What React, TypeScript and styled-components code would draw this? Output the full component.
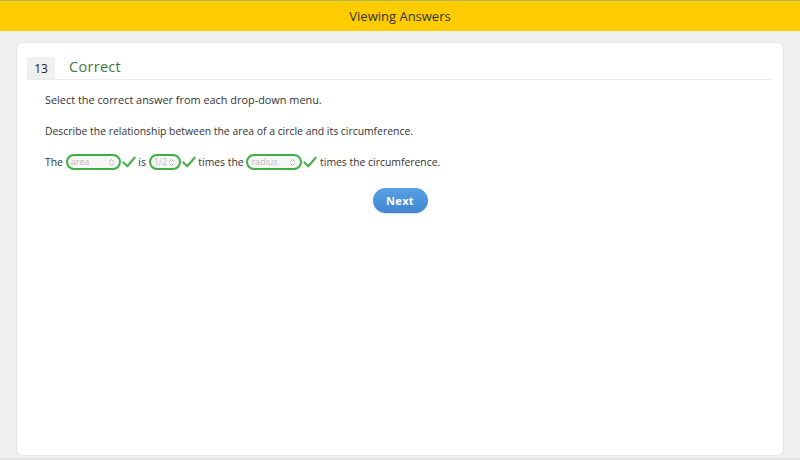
import styled, { createGlobalStyle } from "styled-components";

const GlobalStyle = createGlobalStyle`
  html, body {
    margin: 0;
    padding: 0;
    background: #f0f0f0;
    font-family: "Open Sans", "Liberation Sans", sans-serif;
  }
`;

const Check = () => (
  <CheckIcon viewBox="0 0 16 14" aria-hidden>
    <path d="M1.5 7.5 L6 12 L14.5 2" fill="none" stroke="#4caf50" strokeWidth="2.6" strokeLinecap="round" strokeLinejoin="round" />
  </CheckIcon>
);

const Dropdown = ({ value, width }: { value: string; width: number }) => (
  <>
    <Select $width={width}>
      <span>{value}</span>
      <Arrows viewBox="0 0 8 10" aria-hidden>
        <path d="M1.5 4 L4 1.5 L6.5 4" fill="none" stroke="#aaa" strokeWidth="1" />
        <path d="M1.5 6 L4 8.5 L6.5 6" fill="none" stroke="#aaa" strokeWidth="1" />
      </Arrows>
    </Select>
    <Check />
  </>
);

export default function App() {
  return (
    <Page>
      <GlobalStyle />
      <TopBar>Viewing Answers</TopBar>
      <Main>
        <Card>
          <Header>
            <Number>13</Number>
            <Status>Correct</Status>
          </Header>
          <Body>
            <Para $size={10.9}>Select the correct answer from each drop-down menu.</Para>
            <Para $size={10.4}>Describe the relationship between the area of a circle and its circumference.</Para>
            <Sentence>
              The <Dropdown value="area" width={55} /> is <Dropdown value="1/2" width={32} /> times the{" "}
              <Dropdown value="radius" width={56} /> times the circumference.
            </Sentence>
            <ButtonRow>
              <NextButton>Next</NextButton>
            </ButtonRow>
          </Body>
        </Card>
      </Main>
    </Page>
  );
}

const Page = styled.div`
  width: 800px;
  height: 460px;
  display: flex;
  flex-direction: column;
  background: #f0f0f0;
  border-top: 1px solid #a9b85e;
  box-sizing: border-box;
`;

const TopBar = styled.div`
  height: 30px;
  background: #ffcc00;
  color: #333;
  font-size: 13px;
  display: flex;
  align-items: center;
  justify-content: center;
`;

const Main = styled.div`
  flex: 1;
  padding: 11px 16px 2px;
  display: flex;
  border-bottom: 2px solid #e4e4e4;
`;

const Card = styled.div`
  flex: 1;
  background: #fff;
  border-radius: 7px;
  border: 1px solid #e6e6e6;
  padding: 14px 10px 0 10px;
`;

const Header = styled.div`
  display: flex;
  align-items: stretch;
  height: 22px;
  border-bottom: 1px solid #ececec;
`;

const Number = styled.div`
  width: 28px;
  background: #f0f0f0;
  color: #222;
  font-size: 12px;
  display: flex;
  align-items: center;
  justify-content: center;
`;

const Status = styled.div`
  margin-left: 14px;
  color: #3d7a3d;
  font-size: 14.5px;
  letter-spacing: 0.3px;
  line-height: 20px;
`;

const Body = styled.div`
  padding: 12px 18px 0;
`;

const Para = styled.p<{ $size: number }>`
  margin: 0 0 15px;
  font-size: ${({ $size }) => $size}px;
  line-height: 16px;
  color: #333;
`;

const Sentence = styled.div`
  font-size: 10.4px;
  line-height: 16px;
  color: #333;
  display: flex;
  align-items: center;
  white-space: pre;
`;

const Select = styled.span<{ $width: number }>`
  display: inline-flex;
  align-items: center;
  justify-content: space-between;
  box-sizing: border-box;
  width: ${({ $width }) => $width}px;
  height: 16px;
  border: 2px solid #3cb043;
  border-radius: 8px;
  padding: 0 4px 0 3px;
  font-size: 9px;
  color: #bbb;
  background: #f6f6f6;
`;

const Arrows = styled.svg`
  width: 7px;
  height: 9px;
`;

const CheckIcon = styled.svg`
  width: 14px;
  height: 12px;
  margin-left: 1px;
`;

const ButtonRow = styled.div`
  display: flex;
  justify-content: center;
  margin-top: 18px;
`;

const NextButton = styled.button`
  width: 55px;
  height: 25px;
  border: none;
  border-radius: 13px;
  background: linear-gradient(#5aa0e4, #3f86d2);
  color: #fff;
  font-family: "Open Sans", "Liberation Sans", sans-serif;
  font-weight: 700;
  font-size: 11px;
  letter-spacing: 0.3px;
  box-shadow: 0 1px 1px rgba(0, 0, 0, 0.15);
`;
